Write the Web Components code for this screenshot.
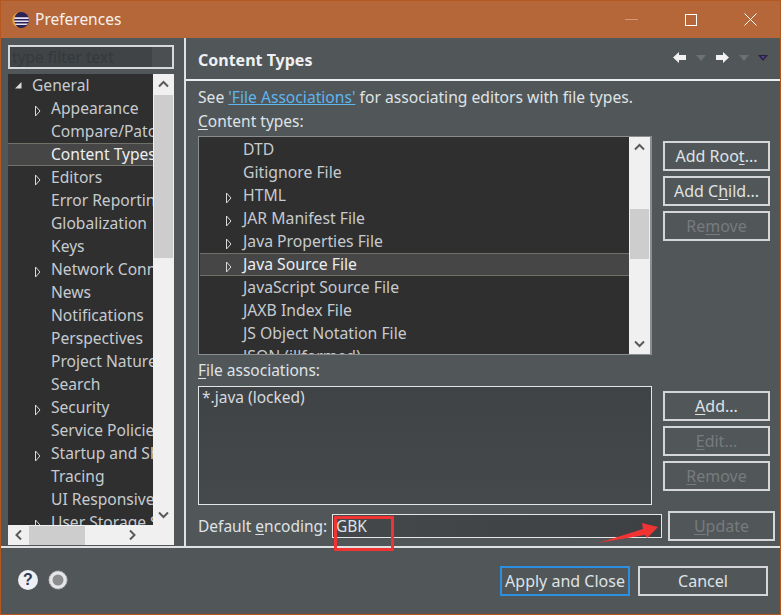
<!DOCTYPE html>
<html>
<head>
<meta charset="utf-8">
<title>Preferences</title>
<style>
    html, body {
        margin: 0;
        padding: 0;
        background: #515659;
    }
</style>
</head>
<body>
<pref-window></pref-window>

<script>
class PrefButton extends HTMLElement {
    constructor() {
        super();
        this.attachShadow({ mode: "open" });
        this.shadowRoot.innerHTML = `
            <style>
                :host {
                    display: flex;
                    align-items: center;
                    justify-content: center;
                    box-sizing: border-box;
                    flex: none;
                    width: 107px;
                    height: 30px;
                    border: 2px solid #d4d6d7;
                    color: #dfe3e6;
                    font: 16px "Noto Sans", sans-serif;
                    white-space: nowrap;
                }
                :host([disabled]) {
                    color: #777b7e;
                }
                :host([default]) {
                    border-color: #2c8fe0;
                }
            </style>
            <slot></slot>
        `;
    }
}

class ScrollArrow extends HTMLElement {
    constructor() {
        super();
        this.attachShadow({ mode: "open" });
        const turn = { up: 0, right: 90, down: 180, left: 270 }[this.getAttribute("dir")];
        this.shadowRoot.innerHTML = `
            <style>
                :host {
                    display: flex;
                    align-items: center;
                    justify-content: center;
                    flex: none;
                    width: 20px;
                    height: 20px;
                }
            </style>
            <svg width="11" height="8" viewBox="0 0 11 8" style="transform: rotate(${turn}deg)">
                <path d="M1 6.5 L5.5 2 L10 6.5" fill="none" stroke="#5a5a5a" stroke-width="2"/>
            </svg>
        `;
    }
}

class VScroll extends HTMLElement {
    constructor() {
        super();
        this.attachShadow({ mode: "open" });
        this.shadowRoot.innerHTML = `
            <style>
                :host {
                    display: flex;
                    flex-direction: column;
                    align-items: center;
                    background: #f0f0f0;
                    overflow: hidden;
                }
                .gap { height: var(--before, 0); flex: none; }
                .thumb { width: 19px; height: var(--thumb, 50px); background: #cdcdcd; flex: none; }
                .rest { flex: 1; }
            </style>
            <scroll-arrow dir="up"></scroll-arrow>
            <div class="gap"></div>
            <div class="thumb"></div>
            <div class="rest"></div>
            <scroll-arrow dir="down"></scroll-arrow>
        `;
    }
}

class TreeRow extends HTMLElement {
    constructor() {
        super();
        this.attachShadow({ mode: "open" });
        this.shadowRoot.innerHTML = `
            <style>
                :host {
                    display: flex;
                    align-items: center;
                    box-sizing: border-box;
                    height: 23px;
                    flex: none;
                    padding-left: var(--indent, 0);
                    padding-bottom: 2px;
                    white-space: nowrap;
                    color: #c6cbd0;
                    border: 1px solid transparent;
                    border-width: 1px 0;
                    font-size: var(--row-font, 15.75px);
                }
                :host([selected]) {
                    background: #464646;
                    color: #eceff1;
                    border-color: #6f7068;
                }
                .twist {
                    flex: none;
                    width: var(--twist, 19px);
                    height: 14px;
                }
            </style>
            <div class="twist"></div>
            <slot></slot>
        `;
        const twist = this.shadowRoot.querySelector(".twist");
        if (this.getAttribute("twist") === "closed") {
            twist.innerHTML = `<svg width="9" height="14" viewBox="0 0 9 14">
                <path d="M2.5 2 L2.5 12 L7 7 Z" fill="none" stroke="#d8dadc" stroke-width="1"/>
            </svg>`;
        }
        if (this.getAttribute("twist") === "open") {
            twist.innerHTML = `<svg width="10" height="14" viewBox="0 0 10 14">
                <path d="M2 7.5 L8.5 7.5 L8.5 1 Z" fill="#d8dadc"/>
            </svg>`;
        }
    }
}

class PrefSidebar extends HTMLElement {
    constructor() {
        super();
        this.attachShadow({ mode: "open" });
        const children = [
            ["Appearance", "closed"], ["Compare/Patch"], ["Content Types", "", "selected"], ["Editors", "closed"],
            ["Error Reporting"], ["Globalization"], ["Keys"], ["Network Connections", "closed"], ["News"],
            ["Notifications"], ["Perspectives"], ["Project Natures"], ["Search"], ["Security", "closed"],
            ["Service Policies"], ["Startup and Shutdown", "closed"], ["Tracing"], ["UI Responsiveness"],
            ["User Storage Service", "closed"]
        ];
        const rows = children.map(([label, twist, selected]) =>
            `<tree-row twist="${twist || ""}" ${selected ? "selected" : ""} style="--indent: 25px; --twist: 18px">${label}</tree-row>`
        ).join("");

        this.shadowRoot.innerHTML = `
            <style>
                :host {
                    display: flex;
                    flex-direction: column;
                    box-sizing: border-box;
                    width: 183px;
                    padding: 7px 10px 0 7px;
                    flex: none;
                    --row-font: 15.6px;
                }
                .filter {
                    box-sizing: border-box;
                    height: 24px;
                    border: 2px solid #d6d8d9;
                    background: linear-gradient(to right, #404447 0 142px, #4b4f52 142px);
                    color: #36393b;
                    font-size: 15.5px;
                    line-height: 20px;
                    padding-left: 2px;
                    margin-bottom: 5px;
                    white-space: nowrap;
                }
                .tree {
                    flex: 1;
                    display: grid;
                    grid-template-columns: 145px 21px;
                    grid-template-rows: 451px 20px;
                    min-height: 0;
                }
                .rows {
                    background: #2f2f2f;
                    overflow: hidden;
                    display: flex;
                    flex-direction: column;
                }
                v-scroll { --before: 1px; --thumb: 163px; }
                .hbar {
                    grid-column: 1 / 3;
                    background: #f0f0f0;
                    display: flex;
                    align-items: center;
                }
                .hthumb { width: 56px; height: 19px; background: #cdcdcd; margin-left: 1px; }
                .hrest { width: 37px; }
            </style>
            <div class="filter">type filter text</div>
            <div class="tree">
                <div class="rows">
                    <tree-row twist="open" style="--indent: 5px">General</tree-row>
                    ${rows}
                </div>
                <v-scroll></v-scroll>
                <div class="hbar">
                    <scroll-arrow dir="left"></scroll-arrow>
                    <div class="hthumb"></div>
                    <div class="hrest"></div>
                    <scroll-arrow dir="right"></scroll-arrow>
                </div>
            </div>
        `;
    }
}

class PrefContent extends HTMLElement {
    constructor() {
        super();
        this.attachShadow({ mode: "open" });
        const types = [
            ["DTD"], ["Gitignore File"], ["HTML", "closed"], ["JAR Manifest File", "closed"],
            ["Java Properties File", "closed"], ["Java Source File", "closed", "selected"],
            ["JavaScript Source File"], ["JAXB Index File"], ["JS Object Notation File"],
            ["JSON (illformed)", "closed"]
        ];
        const rows = types.map(([label, twist, selected]) =>
            `<tree-row twist="${twist || ""}" ${selected ? "selected" : ""} style="--indent: 24px">${label}</tree-row>`
        ).join("");

        this.shadowRoot.innerHTML = `
            <style>
                :host {
                    display: flex;
                    flex-direction: column;
                    flex: 1;
                    min-width: 0;
                    border-left: 2px solid #dfe1e2;
                    font-size: 15.5px;
                }
                u { text-underline-offset: 2px; }
                .head {
                    box-sizing: border-box;
                    height: 43px;
                    flex: none;
                    border-bottom: 2px solid #eceeee;
                    display: flex;
                    align-items: center;
                    justify-content: space-between;
                    padding: 2px 12px 0 12px;
                }
                .head b { font-size: 16px; color: #eef0f1; font-weight: 700; }
                .nav { display: flex; align-items: center; gap: 9px; margin-top: -4px; }
                .body {
                    flex: 1;
                    display: grid;
                    grid-template-columns: 454px 107px;
                    column-gap: 11px;
                    grid-template-rows: 22px 28px 219px 31px 119px 1fr;
                    padding: 5px 0 0 12px;
                    min-height: 0;
                }
                .line { grid-column: 1 / 3; white-space: nowrap; color: #dfe3e6; font-size: 15.65px; }
                .line a { color: #5db5f0; text-decoration: underline; }
                .label { grid-column: 1 / 3; color: #dfe3e6; }
                .label.first { line-height: 26px; }
                .label.second { line-height: 30px; }
                .types {
                    box-sizing: border-box;
                    border: 1px solid #8a8e90;
                    display: grid;
                    grid-template-columns: 1fr 21px;
                    overflow: hidden;
                    background: #2f2f2f;
                    border-right-width: 2px;
                }
                .type-rows {
                    display: flex;
                    flex-direction: column;
                    overflow: hidden;
                    padding: 1px 0 0 1px;
                }
                v-scroll { --before: 52px; --thumb: 50px; }
                .side { display: flex; flex-direction: column; gap: 5px; }
                .side.top { padding-top: 5px; }
                .side.bottom { padding-top: 5px; }
                .assoc {
                    box-sizing: border-box;
                    border: 1px solid #e4e6e6;
                    background: linear-gradient(#3f4346, #46494c);
                    padding: 0 3px;
                    color: #d7dade;
                    line-height: 20px;
                }
                .encoding {
                    grid-column: 1 / 3;
                    display: flex;
                    align-items: flex-start;
                    color: #dfe3e6;
                    padding-top: 9px;
                }
                .encoding span { line-height: 24px; white-space: nowrap; width: 134px; flex: none; }
                .encoding .field {
                    box-sizing: border-box;
                    width: 330px;
                    height: 24px;
                    flex: none;
                    border: 1px solid #e4e6e6;
                    background: linear-gradient(to right, #44484b, #3d4144);
                    padding-left: 3px;
                    line-height: 22px;
                }
                .encoding pref-button { margin: -3px 0 0 6px; }
            </style>
            <div class="head">
                <b>Content Types</b>
                <div class="nav">
                    <svg width="15" height="13" viewBox="0 0 15 13"><path d="M7 1 L1 6.5 L7 12 V9 H14 V4 H7 Z" fill="#f2f2f2"/></svg>
                    <svg width="10" height="6" viewBox="0 0 10 6"><path d="M0 0 H10 L5 6 Z" fill="#6d7173"/></svg>
                    <svg width="15" height="13" viewBox="0 0 15 13"><path d="M8 1 L14 6.5 L8 12 V9 H1 V4 H8 Z" fill="#f2f2f2"/></svg>
                    <svg width="10" height="6" viewBox="0 0 10 6"><path d="M0 0 H10 L5 6 Z" fill="#6d7173"/></svg>
                    <svg width="10" height="6" viewBox="0 0 10 6"><path d="M0 0 H10 L5 6 Z" fill="#2a2140"/><path d="M3 1 H7 L5 4 Z" fill="#5a3a9a"/></svg>
                </div>
            </div>
            <div class="body">
                <div class="line">See <a>'File Associations'</a> for associating editors with file types.</div>
                <div class="label first"><u>C</u>ontent types:</div>
                <div class="types">
                    <div class="type-rows">${rows}</div>
                    <v-scroll></v-scroll>
                </div>
                <div class="side top">
                    <pref-button>Add Roo<u>t</u>...</pref-button>
                    <pref-button>Add C<u>h</u>ild...</pref-button>
                    <pref-button disabled>Re<u>m</u>ove</pref-button>
                </div>
                <div class="label second"><u>F</u>ile associations:</div>
                <div class="assoc">*.java (locked)</div>
                <div class="side bottom">
                    <pref-button><u>A</u>dd...</pref-button>
                    <pref-button disabled><u>E</u>dit...</pref-button>
                    <pref-button disabled><u>R</u>emove</pref-button>
                </div>
                <div class="encoding">
                    <span>Default <u>e</u>ncoding:</span>
                    <div class="field">GBK</div>
                    <pref-button disabled><u>U</u>pdate</pref-button>
                </div>
            </div>
        `;
    }
}

class PrefTitlebar extends HTMLElement {
    constructor() {
        super();
        this.attachShadow({ mode: "open" });
        this.shadowRoot.innerHTML = `
            <style>
                :host {
                    display: flex;
                    align-items: center;
                    box-sizing: border-box;
                    height: 37px;
                    flex: none;
                    background: #b5673a;
                    color: #f7f1ec;
                    font: 15.5px "Noto Sans", sans-serif;
                    padding-left: 11px;
                }
                .title { margin-left: 5px; flex: 1; margin-top: -1px; }
                .ctl { display: flex; align-items: center; justify-content: center; width: 59px; height: 37px; }
                .ctl:last-child { width: 60px; }
            </style>
            <svg width="18" height="18" viewBox="0 0 18 18">
                <circle cx="9" cy="9" r="8" fill="#2c2255"/>
                <path d="M1.5 6.2 A8 8 0 0 0 1.2 8 H16.8 A8 8 0 0 0 16.5 6.2 Z M1.2 9.4 A8 8 0 0 0 1.5 11 H16.5 A8 8 0 0 0 16.8 9.4 Z M2.2 12.4 A8 8 0 0 0 3.4 14 H14.6 A8 8 0 0 0 15.8 12.4 Z" fill="#e6e4f0"/>
                <path d="M7 1.1 A8 8 0 0 0 7 16.9 A9 9 0 0 1 7 1.1 Z" fill="#e8a23c"/>
            </svg>
            <div class="title">Preferences</div>
            <div class="ctl">
                <svg width="13" height="2" viewBox="0 0 13 2"><rect width="13" height="1" fill="#cf9a7c"/></svg>
            </div>
            <div class="ctl">
                <svg width="12" height="12" viewBox="0 0 12 12"><rect x=".5" y=".5" width="11" height="11" fill="none" stroke="#fff"/></svg>
            </div>
            <div class="ctl">
                <svg width="13" height="13" viewBox="0 0 13 13"><path d="M.5 .5 L12.5 12.5 M12.5 .5 L.5 12.5" stroke="#fff" fill="none"/></svg>
            </div>
        `;
    }
}

class PrefFooter extends HTMLElement {
    constructor() {
        super();
        this.attachShadow({ mode: "open" });
        this.shadowRoot.innerHTML = `
            <style>
                :host {
                    display: flex;
                    align-items: center;
                    box-sizing: border-box;
                    height: 68px;
                    flex: none;
                    border-top: 2px solid #dfe1e2;
                    padding: 0 12px 1px 17px;
                    gap: 10px;
                }
                .question {
                    flex: none;
                    color: #2d3a55;
                    font: 700 16px/20px "Liberation Sans", sans-serif;
                    width: 20px;
                    height: 20px;
                    border-radius: 50%;
                    background: #eef0f3;
                    text-align: center;
                    margin-top: -2px;
                }
                svg { margin-top: -2px; }
                .spacer { flex: 1; }
                pref-button { width: 130px; }
                .cancel { margin-left: -2px; }
            </style>
            <div class="question">?</div>
            <svg width="20" height="20" viewBox="0 0 20 20">
                <circle cx="10" cy="10" r="9" fill="#e4e6e8" stroke="#b9bcbf" stroke-dasharray="2 1"/>
                <circle cx="10" cy="10" r="5.5" fill="#8b8d8f"/>
            </svg>
            <div class="spacer"></div>
            <pref-button default>Apply and Close</pref-button>
            <pref-button class="cancel">Cancel</pref-button>
        `;
    }
}

class PrefWindow extends HTMLElement {
    constructor() {
        super();
        this.attachShadow({ mode: "open" });
        this.shadowRoot.innerHTML = `
            <style>
                :host {
                    display: flex;
                    flex-direction: column;
                    position: relative;
                    box-sizing: border-box;
                    width: 781px;
                    height: 615px;
                    border: 1px solid #b5581f;
                    background: #515659;
                    color: #dfe3e6;
                    font: 15px "Noto Sans", sans-serif;
                    overflow: hidden;
                }
                .main { flex: 1; display: flex; min-height: 0; }
                /* red marks drawn on top of the screenshot */
                .mark {
                    position: absolute;
                    left: 333px;
                    top: 515px;
                    width: 60px;
                    height: 35px;
                    box-sizing: border-box;
                    border: 3px solid #f03333;
                }
                .arrow { position: absolute; left: 596px; top: 521px; }
            </style>
            <pref-titlebar></pref-titlebar>
            <div class="main">
                <pref-sidebar></pref-sidebar>
                <pref-content></pref-content>
            </div>
            <pref-footer></pref-footer>
            <div class="mark"></div>
            <svg class="arrow" width="64" height="24" viewBox="0 0 64 24">
                <path d="M1 21 L46 7 L45 1 L61 5 L50 16 L48 13 Z" fill="#f03333"/>
            </svg>
        `;
    }
}

customElements.define("pref-button", PrefButton);
customElements.define("scroll-arrow", ScrollArrow);
customElements.define("v-scroll", VScroll);
customElements.define("tree-row", TreeRow);
customElements.define("pref-sidebar", PrefSidebar);
customElements.define("pref-content", PrefContent);
customElements.define("pref-titlebar", PrefTitlebar);
customElements.define("pref-footer", PrefFooter);
customElements.define("pref-window", PrefWindow);
</script>
</body>
</html>
